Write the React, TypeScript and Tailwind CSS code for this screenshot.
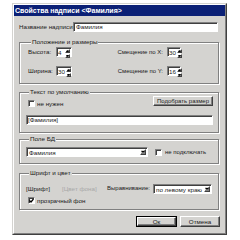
import React from "react";

const raised =
  "border border-t-white border-l-white border-r-[#404040] border-b-[#404040] shadow-[inset_-1px_-1px_0_#808080]";
const sunken =
  "border border-t-[#808080] border-l-[#808080] border-r-white border-b-white shadow-[inset_1px_1px_0_#404040]";

function Spin({ value, w }: { value: string; w: string }) {
  return (
    <div className={`flex h-[10px] bg-white ${sunken} ${w}`}>
      <span className="flex-1 pl-[1px] pt-[1px] text-[6.25px] leading-[7px]">{value}</span>
      <div className="m-[1px] flex w-[5px] flex-col gap-px">
        <div className={`flex flex-1 items-center justify-center bg-[#d4d3d0] ${raised} border-[0.5px]`}>
          <svg width="3" height="2" viewBox="0 0 3 2">
            <path d="M1.5 0 L3 2 L0 2 Z" fill="#000" />
          </svg>
        </div>
        <div className={`flex flex-1 items-center justify-center bg-[#d4d3d0] ${raised} border-[0.5px]`}>
          <svg width="3" height="2" viewBox="0 0 3 2">
            <path d="M0 0 L3 0 L1.5 2 Z" fill="#000" />
          </svg>
        </div>
      </div>
    </div>
  );
}

function Check({ checked }: { checked?: boolean }) {
  return (
    <div className={`flex h-[7px] w-[7px] items-center justify-center bg-white ${sunken}`}>
      {checked && (
        <svg width="5" height="5" viewBox="0 0 5 5">
          <path d="M0.5 2.5 L2 4 L4.5 1" stroke="#000" strokeWidth="1.2" fill="none" />
        </svg>
      )}
    </div>
  );
}

function Select({ value, w }: { value: string; w: string }) {
  return (
    <div className={`flex h-[10px] bg-white ${sunken} ${w}`}>
      <span className="flex-1 pl-[2px] pt-[1px] text-[6.25px] leading-[7px]">{value}</span>
      <div className={`m-[1px] flex w-[6px] items-center justify-center bg-[#d4d3d0] ${raised}`}>
        <svg width="4" height="2" viewBox="0 0 4 2">
          <path d="M0 0 L4 0 L2 2 Z" fill="#000" />
        </svg>
      </div>
    </div>
  );
}

function Group({ title, className, children }: { title: string; className: string; children: React.ReactNode }) {
  return (
    <fieldset className={`border border-[#808080] shadow-[1px_1px_0_#fff,inset_1px_1px_0_#fff] ${className}`}>
      <legend className="ml-[3px] h-[8px] bg-[#d4d3d0] px-[1px] text-[6.25px] leading-[8px]">{title}</legend>
      {children}
    </fieldset>
  );
}

export default function App() {
  return (
    <div className="h-[240px] w-[240px] whitespace-nowrap bg-white pl-[12px] pt-[3px] font-['Liberation_Sans',sans-serif] text-[#1a1a1a]">
      <div className="h-[232px] w-[215px] border border-t-[#d4d3d0] border-l-[#d4d3d0] border-r-[#404040] border-b-[#404040] bg-[#d4d3d0]">
        <div className="flex h-full flex-col border border-t-white border-l-white border-r-[#808080] border-b-[#808080]">
          {/* Title */}
          <div className="flex h-[11px] items-center bg-[#0b2076] pl-[1px]">
            <span className="text-[7px] font-bold leading-none text-white">Свойства надписи &lt;Фамилия&gt;</span>
          </div>

          <div className="flex flex-col pl-[5px] pr-[6px]">
            {/* Name */}
            <div className="mt-[6px] flex h-[10px] items-center">
              <span className="w-[54px] text-[6.25px]">Название надписи:</span>
              <div className={`h-[10px] w-[145px] bg-white pl-[2px] text-[6.25px] leading-[8px] ${sunken}`}>Фамилия</div>
            </div>

            {/* Position */}
            <Group title="Положение и размеры" className="mt-[6px] pb-[7px] pl-[8px] pr-[37px] pt-[1px]">
              <div className="flex h-[10px] items-center">
                <span className="w-[28px] text-[6.25px]">Высота:</span>
                <Spin value="4" w="w-[16px]" />
                <span className="ml-auto mr-[4px] text-[6px]">Смещение по X:</span>
                <Spin value="30" w="w-[14px]" />
              </div>
              <div className="mt-[9px] flex h-[10px] items-center">
                <span className="w-[28px] text-[6.25px]">Ширина:</span>
                <Spin value="30" w="w-[16px]" />
                <span className="ml-auto mr-[4px] text-[6px]">Смещение по Y:</span>
                <Spin value="16" w="w-[14px]" />
              </div>
            </Group>

            {/* Default text */}
            <Group title="Текст по умолчанию" className="mt-[4px] pb-[7px] pl-[6px] pr-[5px]">
              <div className="flex items-start justify-between">
                <div className="mt-[4px] flex items-center gap-[2px] pl-[2px]">
                  <Check />
                  <span className="text-[6.25px] leading-[7px]">не нужен</span>
                </div>
                <div className={`flex h-[10px] w-[60px] items-center justify-center bg-[#d4d3d0] text-[6px] ${raised}`}>
                  Подобрать размер
                </div>
              </div>
              <div className={`mt-[8px] h-[10px] bg-white pl-[1px] text-[6.25px] leading-[8px] ${sunken}`}>[Фамилия]</div>
            </Group>

            {/* DB field */}
            <Group title="Поле БД" className="mt-[2px] pb-[6px] pl-[6px] pt-[4px]">
              <div className="flex items-center">
                <Select value="Фамилия" w="w-[122px]" />
                <div className="ml-[7px] flex items-center gap-[3px]">
                  <Check />
                  <span className="text-[6px] leading-[7px]">не подключать</span>
                </div>
              </div>
            </Group>

            {/* Font and colour */}
            <Group title="Шрифт и цвет" className="mt-[5px] pb-[5px] pl-[6px] pt-[7px]">
              <div className="flex h-[9px] items-center">
                <span className="w-[36px] text-[6.25px]">[Шрифт]</span>
                <span className="w-[45px] text-[6.25px] text-[#a8a8a8]">[Цвет фона]</span>
                <span className="w-[46px] text-[6px]">Выравнивание:</span>
                <Select value="по левому краю" w="w-[59px]" />
              </div>
              <div className="mt-[4px] flex items-center gap-[2px] pl-[2px]">
                <Check checked />
                <span className="text-[6.25px] leading-[7px]">прозрачный фон</span>
              </div>
            </Group>

            {/* Buttons */}
            <div className="-mr-[1px] mt-[6px] flex justify-end gap-[3px]">
              <div className="border border-black">
                <div className={`flex h-[9px] w-[39px] items-center justify-center bg-[#d4d3d0] text-[6.25px] ${raised}`}>Ок</div>
              </div>
              <div className={`flex h-[11px] w-[40px] items-center justify-center bg-[#d4d3d0] text-[6.25px] ${raised}`}>Отмена</div>
            </div>
          </div>
        </div>
      </div>
    </div>
  );
}
